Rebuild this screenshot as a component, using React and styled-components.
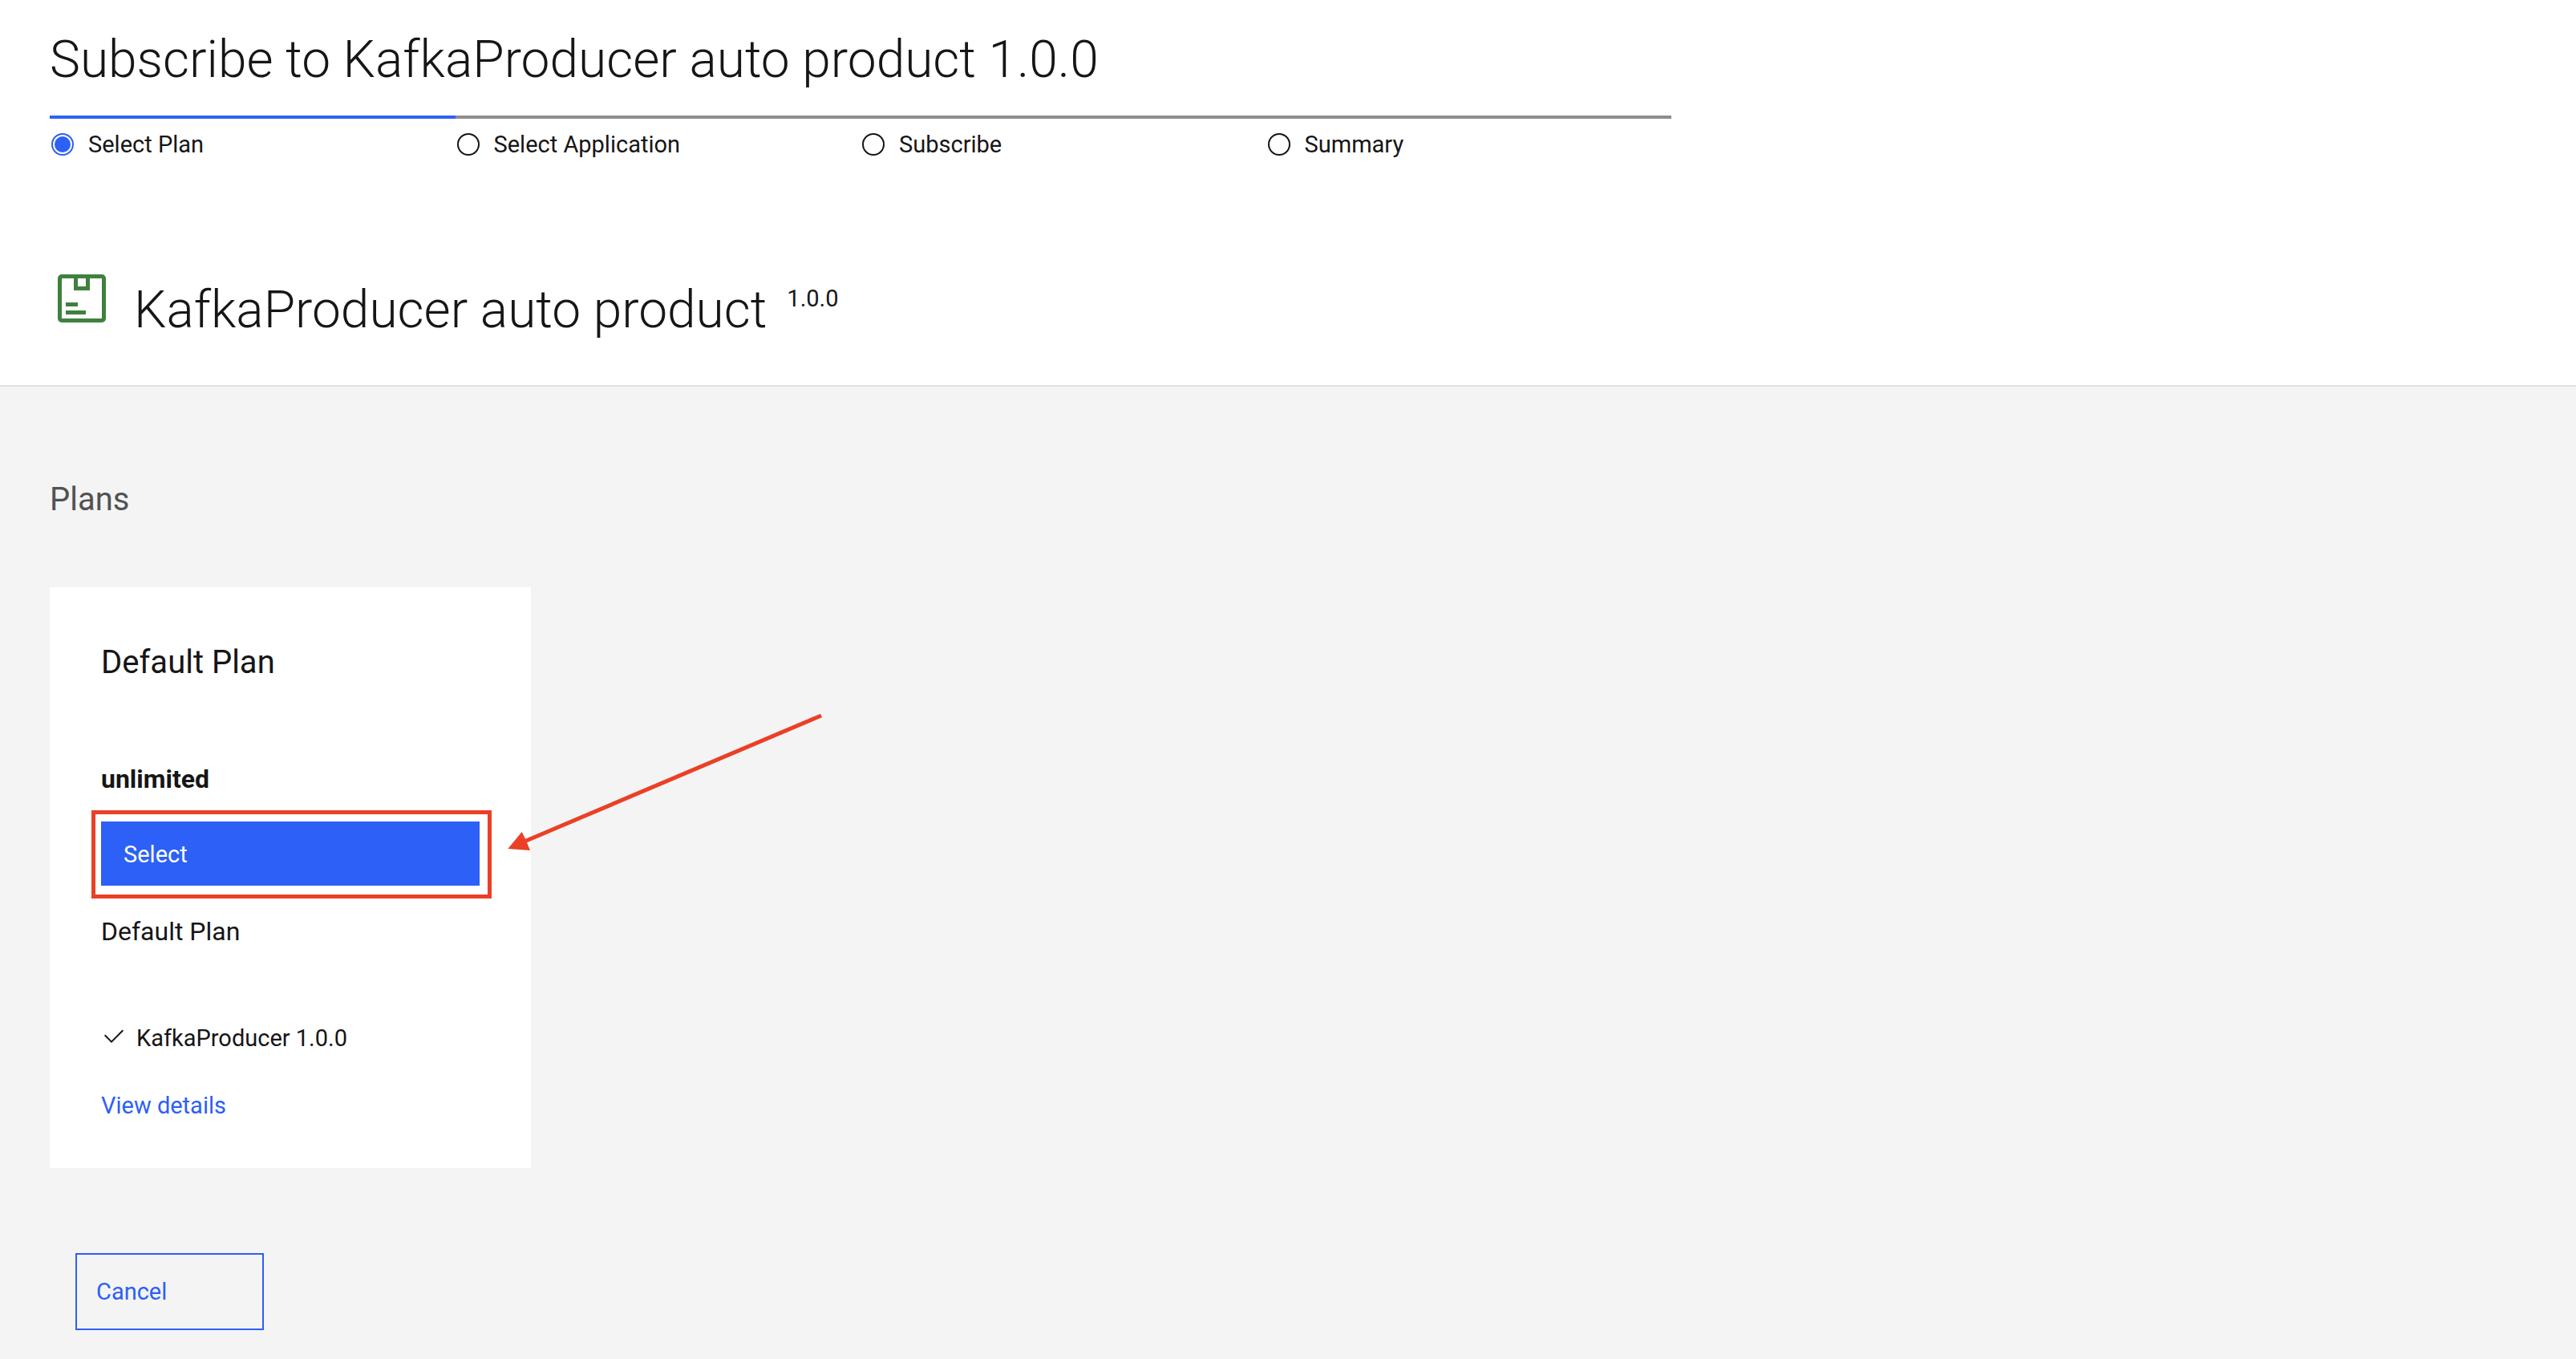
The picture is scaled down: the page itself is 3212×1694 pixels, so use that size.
import React, { useState } from 'react';
import styled, { createGlobalStyle } from 'styled-components';

const color = {
  text: '#161616',
  muted: '#525252',
  blue: '#2c60f6',
  grey: '#8d8d8d',
  line: '#e0e0e0',
  surface: '#f4f4f4',
  green: '#3f803f',
  mark: '#eb4026',
};

const GlobalStyle = createGlobalStyle`
  *, *::before, *::after { box-sizing: border-box; }
  body {
    margin: 0;
    background: ${color.surface};
    color: ${color.text};
    font-family: Roboto, "Liberation Sans", sans-serif;
    font-size: 29px;
    line-height: 36px;
  }
`;

const Page = styled.main`
  display: flex;
  flex-direction: column;
  min-height: 100vh;
`;

const Header = styled.header`
  display: flex;
  flex-direction: column;
  padding: 35px 62px 53px;
  background: #fff;
  border-bottom: 2px solid ${color.line};
`;

const Heading = styled.h1`
  margin: 0;
  font-size: 64px;
  font-weight: 300;
  line-height: 80px;
`;

const Steps = styled.ol`
  display: grid;
  grid-template-columns: repeat(4, 1fr);
  width: 100%;
  max-width: 2022px;
  margin: 29px 0 0;
  padding: 0;
  list-style: none;
`;

const Step = styled.li`
  padding: 14px 0 0 2px;
  border-top: 4px solid ${(p) => (p.$current ? color.blue : color.grey)};
`;

const StepLabel = styled.label`
  display: flex;
  align-items: center;
  gap: 18px;
`;

const StepRadio = styled.input`
  appearance: none;
  flex: none;
  width: 28px;
  height: 28px;
  margin: 0;
  border: 2px solid ${color.text};
  border-radius: 50%;
  background: #fff;

  &:checked {
    padding: 2px;
    border-color: ${color.blue};
    background: ${color.blue} content-box;
  }
`;

const Product = styled.div`
  display: flex;
  align-items: flex-start;
  gap: 25px;
  margin-top: 134px;
`;

const ProductIcon = styled.svg`
  flex: none;
  width: 80px;
  height: 80px;
  fill: ${color.green};
`;

const ProductName = styled(Heading).attrs({ as: 'h2' })`
  padding-top: 15px;
`;

const Version = styled.span`
  padding-top: 22px;
`;

const Body = styled.section`
  display: flex;
  flex: 1;
  flex-direction: column;
  align-items: flex-start;
  padding: 115px 62px 36px;
  background: ${color.surface};
`;

const SectionTitle = styled.h2`
  margin: 0 0 83px;
  color: ${color.muted};
  font-size: 40px;
  font-weight: 400;
  line-height: 52px;
`;

const Card = styled.article`
  display: flex;
  flex-direction: column;
  width: 600px;
  max-width: 100%;
  padding: 64px 64px 60px;
  background: #fff;
`;

const CardTitle = styled.h3`
  margin: 0;
  font-size: 40px;
  font-weight: 400;
  line-height: 60px;
`;

const CardText = styled.p`
  margin: ${(p) => p.$gap}px 0 0;
  font-size: 32px;
  font-weight: ${(p) => (p.$strong ? 700 : 400)};
  line-height: 44px;
`;

const Highlight = styled.div`
  position: relative;
  margin-top: 31px;

  &::before {
    content: '';
    position: absolute;
    inset: -14px -15px -16px -12px;
    border: 5px solid ${color.mark};
    pointer-events: none;
  }
`;

const Arrow = styled.svg`
  position: absolute;
  top: -139px;
  left: 504px;
  width: 400px;
  height: 180px;
  fill: ${color.mark};
  stroke: none;
  pointer-events: none;
`;

const Button = styled.button`
  display: block;
  font: inherit;
  text-align: left;
  cursor: pointer;
`;

const SelectButton = styled(Button)`
  width: 100%;
  height: 80px;
  padding: 2px 28px 0;
  border: 0;
  background: ${color.blue};
  color: #fff;
`;

const CancelButton = styled(Button)`
  width: 235px;
  height: 96px;
  margin: 106px 0 0 32px;
  padding: 0 24px;
  border: 2px solid ${color.blue};
  background: transparent;
  color: ${color.blue};
`;

const Features = styled.ul`
  margin: 93px 0 48px;
  padding: 0;
  list-style: none;
`;

const Feature = styled.li`
  display: flex;
  align-items: flex-start;
  gap: 12px;
`;

const CheckIcon = styled.svg`
  flex: none;
  width: 32px;
  height: 32px;
`;

const DetailsLink = styled.a`
  align-self: flex-start;
  color: ${color.blue};
  text-decoration: none;
`;

const STEPS = ['Select Plan', 'Select Application', 'Subscribe', 'Summary'];

export default function App() {
  const [step, setStep] = useState(0);

  return (
    <>
      <GlobalStyle />
      <Page>
        <Header>
          <Heading>Subscribe to KafkaProducer auto product 1.0.0</Heading>
          <Steps>
            {STEPS.map((name, i) => (
              <Step key={name} $current={i === step}>
                <StepLabel htmlFor={`step-${i}`}>
                  <StepRadio
                    type="radio"
                    name="step"
                    id={`step-${i}`}
                    checked={i === step}
                    onChange={() => setStep(i)}
                  />
                  {name}
                </StepLabel>
              </Step>
            ))}
          </Steps>
          <Product>
            <ProductIcon viewBox="0 0 32 32" aria-hidden="true">
              <path d="M8 18h6v2H8zM8 22h10v2H8z" />
              <path
                fillRule="evenodd"
                d="M6 4h20a2 2 0 0 1 2 2v20a2 2 0 0 1-2 2H6a2 2 0 0 1-2-2V6a2 2 0 0 1 2-2zM6 6v20h20V6h-6v6h-8V6zM14 6v4h4V6z"
              />
            </ProductIcon>
            <ProductName>KafkaProducer auto product</ProductName>
            <Version>1.0.0</Version>
          </Product>
        </Header>

        <Body>
          <SectionTitle>Plans</SectionTitle>
          <Card>
            <CardTitle>Default Plan</CardTitle>
            <CardText $gap={93} $strong>
              unlimited
            </CardText>
            <Highlight>
              <SelectButton type="button">Select</SelectButton>
              <Arrow viewBox="0 0 400 180" aria-hidden="true">
                <path d="M393 4.700L395 9.300 27 165.300 31 175 3.300 173 20.700 152 25 160.700z" />
              </Arrow>
            </Highlight>
            <CardText $gap={35}>Default Plan</CardText>
            <Features>
              <Feature>
                <CheckIcon viewBox="0 0 32 32" aria-hidden="true">
                  <path d="M13 24L4 15l1.414-1.414L13 21.171 26.586 7.586 28 9z" fill={color.text} />
                </CheckIcon>
                KafkaProducer 1.0.0
              </Feature>
            </Features>
            <DetailsLink href="#details">View details</DetailsLink>
          </Card>
          <CancelButton type="button">Cancel</CancelButton>
        </Body>
      </Page>
    </>
  );
}
